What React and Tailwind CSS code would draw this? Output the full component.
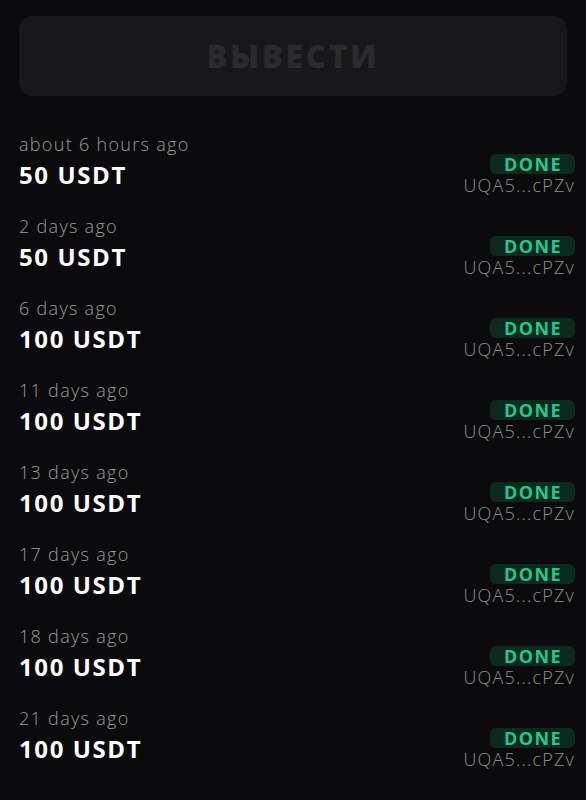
const withdrawals = [
  { time: "about 6 hours ago", amount: "50 USDT" },
  { time: "2 days ago", amount: "50 USDT" },
  { time: "6 days ago", amount: "100 USDT" },
  { time: "11 days ago", amount: "100 USDT" },
  { time: "13 days ago", amount: "100 USDT" },
  { time: "17 days ago", amount: "100 USDT" },
  { time: "18 days ago", amount: "100 USDT" },
  { time: "21 days ago", amount: "100 USDT" },
];

const Row = ({ time, amount }) => (
  <div className="flex justify-between h-[82px]">
    <div className="flex flex-col">
      <span className="text-[18px] leading-[24px] font-light tracking-[1.3px] text-[#9b9b9b]">{time}</span>
      <span className="mt-[5px] text-[24px] leading-[28px] font-bold tracking-[1.6px] text-white">{amount}</span>
    </div>
    <div className="-mr-[8px] flex flex-col items-end pt-[22px]">
      <span className="pl-[14px] pr-[13px] rounded-[6px] bg-[#0d2a1f] text-[18px] leading-[20px] font-bold tracking-[1.4px] text-[#20c98b]">
        DONE
      </span>
      <span className="mt-[2px] text-[18px] leading-[19px] font-light tracking-[1.2px] text-[#8e8e8e]">UQA5...cPZv</span>
    </div>
  </div>
);

export default function App() {
  return (
    <div
      className="min-h-[800px] bg-[#0b0b0d] px-[19px] pt-[16px]"
      style={{ fontFamily: '"Open Sans", "Noto Sans", sans-serif' }}
    >
      <button className="w-full h-[80px] rounded-[14px] bg-[#18181a] text-[31px] font-black tracking-[3px] text-[#2b2b2d]">
        ВЫВЕСТИ
      </button>
      <div className="mt-[36px]">
        {withdrawals.map((w, i) => (
          <Row key={i} {...w} />
        ))}
      </div>
    </div>
  );
}
